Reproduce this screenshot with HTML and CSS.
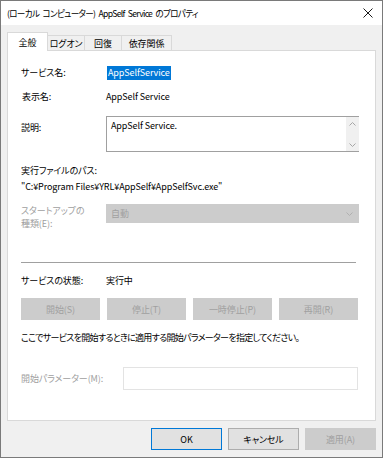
FILE: index.html
```html
<!DOCTYPE html>
<html lang="ja">
<head>
    <meta charset="UTF-8">
    <title>AppSelf Service のプロパティ</title>
    <link rel="stylesheet" href="styles.css">
</head>
<body>
    <div class="window">
        <!-- タイトルバー -->
        <div class="titlebar">
            <span class="title">(ローカル コンピューター) AppSelf Service のプロパティ</span>
            <svg class="close" width="10" height="10" viewBox="0 0 10 10">
                <path d="M0.5 0.5L9.5 9.5M9.5 0.5L0.5 9.5" stroke="#1a1a1a" stroke-width="1"/>
            </svg>
        </div>

        <div class="body">
            <!-- タブ -->
            <div class="tabs">
                <div class="tab active">全般</div>
                <div class="tab t-logon">ログオン</div>
                <div class="tab t-recover">回復</div>
                <div class="tab t-deps">依存関係</div>
            </div>

            <div class="panel">
                <div class="row r-name">
                    <span class="label">サービス名:</span>
                    <span class="selected">AppSelfService</span>
                </div>
                <div class="row r-display">
                    <span class="label">表示名:</span>
                    <span>AppSelf Service</span>
                </div>
                <div class="row r-desc">
                    <span class="label">説明:</span>
                    <div class="textarea">
                        <span class="ta-text">AppSelf Service.</span>
                        <div class="scrollbar">
                            <svg width="7" height="4" viewBox="0 0 7 4"><path d="M0.5 3.5L3.5 0.5L6.5 3.5" fill="none" stroke="#a6a6a6"/></svg>
                            <svg width="7" height="4" viewBox="0 0 7 4"><path d="M0.5 0.5L3.5 3.5L6.5 0.5" fill="none" stroke="#a6a6a6"/></svg>
                        </div>
                    </div>
                </div>
                <div class="exe-label">実行ファイルのパス:</div>
                <div class="exe-path">"C:¥Program Files¥YRL¥AppSelf¥AppSelfSvc.exe"</div>
                <div class="row r-startup">
                    <span class="label disabled two-line">スタートアップの<br>種類(E):</span>
                    <div class="select">
                        <span>自動</span>
                        <svg width="7" height="4" viewBox="0 0 7 4"><path d="M0.5 0.5L3.5 3.5L6.5 0.5" fill="none" stroke="#b0b0b0"/></svg>
                    </div>
                </div>

                <div class="separator"></div>

                <div class="row r-status">
                    <span class="label">サービスの状態:</span>
                    <span>実行中</span>
                </div>
                <div class="svc-buttons">
                    <button class="btn" disabled>開始(S)</button>
                    <button class="btn" disabled>停止(T)</button>
                    <button class="btn" disabled>一時停止(P)</button>
                    <button class="btn" disabled>再開(R)</button>
                </div>
                <div class="hint">ここでサービスを開始するときに適用する開始パラメーターを指定してください。</div>
                <div class="row r-param">
                    <span class="label disabled">開始パラメーター(M):</span>
                    <div class="param-input"></div>
                </div>
            </div>

            <!-- 下部ボタン -->
            <div class="footer">
                <button class="btn fbtn default">OK</button>
                <button class="btn fbtn">キャンセル</button>
                <button class="btn fbtn" disabled>適用(A)</button>
            </div>
        </div>
    </div>
</body>
</html>
```

FILE: styles.css
```css
/* 全体 */
body {
    margin: 0;
    font-family: "Noto Sans CJK JP", "Noto Sans", sans-serif;
    font-size: 9px;
    font-feature-settings: "palt";
    letter-spacing: -0.1px;
    color: #000;
    background: #fff;
}

.window {
    width: 383px;
    height: 458px;
    box-sizing: border-box;
    border: 1px solid #7a7a7a;
    background: #f0f0f0;
    display: flex;
    flex-direction: column;
}

/* タイトルバー */
.titlebar {
    height: 24px;
    background: #fff;
    display: flex;
    align-items: center;
    justify-content: space-between;
    padding: 0 9px 0 6px;
}

.title {
    font-size: 8.6px;
    letter-spacing: -0.7px;
    word-spacing: 2px;
    white-space: nowrap;
}

.close {
    display: block;
}

.body {
    flex: 1;
    display: flex;
    flex-direction: column;
    padding: 7px 6px 0 6px;
}

/* タブ */
.tabs {
    display: flex;
    align-items: flex-end;
    height: 18px;
}

.tab {
    box-sizing: border-box;
    height: 15px;
    border: 1px solid #d9d9d9;
    border-bottom: none;
    border-left: none;
    display: flex;
    align-items: center;
    justify-content: center;
    background: #f0f0f0;
    line-height: 1;
    white-space: nowrap;
}

.tab.active {
    width: 41px;
    height: 19px;
    margin-bottom: -1px;
    background: #fff;
    border-left: 1px solid #d9d9d9;
    position: relative;
    z-index: 1;
}

.t-logon { width: 37px; }
.t-recover { width: 37px; }
.t-deps { width: 50px; }

/* パネル */
.panel {
    height: 371px;
    box-sizing: border-box;
    background: #fff;
    border: 1px solid #d9d9d9;
    padding: 15px 0 0 13px;
}

.row {
    display: flex;
    line-height: 14px;
    white-space: nowrap;
}

.label {
    width: 85px;
    flex-shrink: 0;
}

.disabled {
    color: #a0a0a0;
}

.selected {
    background: #0078d7;
    color: #fff;
    margin-left: 1px;
    padding: 0 1px;
}

.r-name {
    height: 14px;
}

.r-display {
    margin-top: 10px;
    padding-left: 1px;
}

.r-display .label {
    width: 84px;
}

.r-desc {
    margin-top: 12px;
}

.r-desc .label {
    padding-top: 5px;
}

.textarea {
    width: 253px;
    height: 36px;
    box-sizing: border-box;
    border: 1px solid #a0a0a0;
    border-right: none;
    display: flex;
    justify-content: space-between;
}

.ta-text {
    padding: 2px 0 0 4px;
}

.scrollbar {
    width: 13px;
    background: #f0f0f0;
    display: flex;
    flex-direction: column;
    justify-content: space-between;
    align-items: center;
    padding: 5px 0 4px;
}

.scrollbar svg {
    display: block;
}

.exe-label {
    margin-top: 12px;
    line-height: 14px;
}

.exe-path {
    margin-top: 2px;
    line-height: 14px;
    white-space: nowrap;
}

.r-startup {
    margin-top: 10px;
    height: 19px;
}

.two-line {
    line-height: 13px;
}

.select {
    width: 253px;
    height: 19px;
    box-sizing: border-box;
    background: #cccccc;
    color: #a0a0a0;
    display: flex;
    align-items: center;
    justify-content: space-between;
    padding: 0 6px 0 5px;
}

.select svg {
    display: block;
}

.separator {
    width: 335px;
    height: 1px;
    background: #a0a0a0;
    margin-top: 39px;
}

.r-status {
    margin-top: 11px;
}

/* ボタン */
.btn {
    font-family: inherit;
    font-size: 9px;
    font-feature-settings: "palt";
    letter-spacing: -0.1px;
    height: 22px;
    box-sizing: border-box;
    border: 1px solid #adadad;
    background: #e1e1e1;
    color: #000;
    padding: 0;
    margin: 0;
}

.btn:disabled {
    background: #cccccc;
    border-color: #cccccc;
    color: #a0a0a0;
}

.svc-buttons {
    display: flex;
    gap: 7px;
    margin-top: 10px;
}

.svc-buttons .btn {
    width: 79px;
}

.hint {
    margin-top: 11px;
    line-height: 14px;
    white-space: nowrap;
    letter-spacing: -0.7px;
}

.r-param {
    margin-top: 22px;
    align-items: center;
}

.r-param .label {
    width: 102px;
}

.param-input {
    width: 235px;
    height: 23px;
    box-sizing: border-box;
    border: 1px solid #e3e3e3;
}

/* 下部 */
.footer {
    display: flex;
    justify-content: flex-end;
    gap: 6px;
    margin-top: 7px;
}

.fbtn {
    width: 71px;
}

.fbtn.default {
    border-color: #0078d7;
}
```
